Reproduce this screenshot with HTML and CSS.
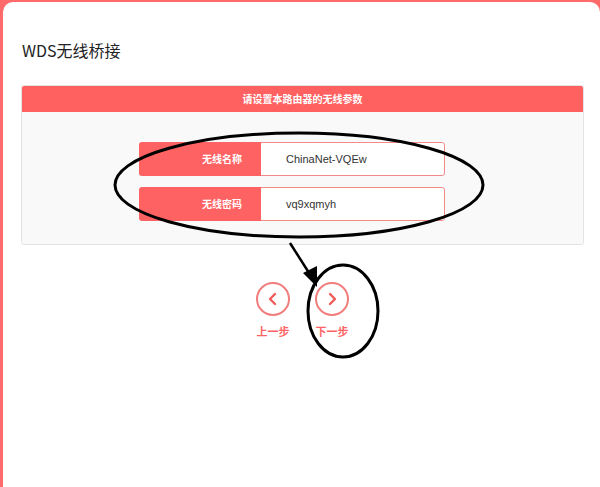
FILE: index.html
```html
<!DOCTYPE html>
<html lang="zh">
<head>
<meta charset="utf-8">
<title>WDS无线桥接</title>
<link rel="stylesheet" href="styles.css">
</head>
<body>
<div class="page">
  <h1 class="title">WDS无线桥接</h1>
  <div class="panel">
    <div class="panel-head">请设置本路由器的无线参数</div>
    <div class="panel-body">
      <div class="field">
        <div class="field-label">无线名称</div>
        <div class="field-value">ChinaNet-VQEw</div>
      </div>
      <div class="field">
        <div class="field-label">无线密码</div>
        <div class="field-value">vq9xqmyh</div>
      </div>
    </div>
  </div>
  <div class="nav">
    <div class="nav-btn">
      <div class="circle">
        <svg width="14" height="14" viewBox="0 0 14 14"><polyline points="9,2 4,7 9,12" fill="none" stroke="#f25a5a" stroke-width="2.4" stroke-linecap="round" stroke-linejoin="round"/></svg>
      </div>
      <div class="nav-label">上一步</div>
    </div>
    <div class="nav-btn">
      <div class="circle">
        <svg width="14" height="14" viewBox="0 0 14 14"><polyline points="5,2 10,7 5,12" fill="none" stroke="#f25a5a" stroke-width="2.4" stroke-linecap="round" stroke-linejoin="round"/></svg>
      </div>
      <div class="nav-label">下一步</div>
    </div>
  </div>
</div>
<svg class="marks" width="600" height="487" viewBox="0 0 600 487">
  <ellipse cx="299" cy="185" rx="184" ry="52" fill="none" stroke="#000" stroke-width="3"/>
  <line x1="290" y1="243" x2="311" y2="276" stroke="#000" stroke-width="2.5"/>
  <polygon points="317,287 303,273 317,266" fill="#000"/>
  <ellipse cx="343" cy="311" rx="35" ry="46" fill="none" stroke="#000" stroke-width="3"/>
</svg>
</body>
</html>
```

FILE: styles.css
```css
html, body {
  margin: 0;
  padding: 0;
}
body {
  background: #ff6b6b;
  width: 600px;
  height: 487px;
  overflow: hidden;
  position: relative;
  font-family: "Noto Sans CJK SC", "Noto Sans", sans-serif;
}
.page {
  margin: 2px 0 0 3px;
  height: 485px;
  background: #fff;
  border-radius: 10px 10px 0 0;
  overflow: hidden;
}
.title {
  margin: 0;
  padding: 38px 0 0 19px;
  font-size: 16px;
  line-height: 20px;
  font-weight: normal;
  color: #222;
}
.panel {
  margin: 25px 16px 0 18px;
  border: 1px solid #e3e3e3;
  border-radius: 3px;
  background: #f9f9f9;
  overflow: hidden;
}
.panel-head {
  height: 27px;
  margin: -1px -1px 0 -1px;
  background: #ff6161;
  color: #fff;
  font-size: 10px;
  font-weight: bold;
  line-height: 27px;
  text-align: center;
}
.panel-body {
  padding: 30px 0 23px 117px;
  display: flex;
  flex-direction: column;
  gap: 11px;
}
.field {
  width: 306px;
  height: 34px;
  display: flex;
  border-radius: 3px;
  overflow: hidden;
}
.field-label {
  width: 122px;
  background: #ff6262;
  color: #fff;
  font-size: 10px;
  font-weight: bold;
  line-height: 34px;
  text-align: right;
  padding-right: 19px;
  box-sizing: border-box;
}
.field-value {
  flex: 1;
  background: #fff;
  border: 1px solid #f28a8a;
  border-left: none;
  border-radius: 0 3px 3px 0;
  color: #333;
  font-family: "Liberation Sans", Arial, sans-serif;
  font-size: 11px;
  line-height: 32px;
  padding-left: 25px;
}
.nav {
  display: flex;
  justify-content: center;
  gap: 25px;
  margin: 37px 0 0 0;
  padding-left: 2px;
}
.nav-btn {
  display: flex;
  flex-direction: column;
  align-items: center;
  width: 34px;
}
.circle {
  width: 30px;
  height: 30px;
  border: 2px solid #f27d7d;
  border-radius: 50%;
  display: flex;
  align-items: center;
  justify-content: center;
}
.nav-label {
  margin-top: 8px;
  font-size: 11px;
  font-weight: bold;
  color: #ff6464;
  line-height: 14px;
  white-space: nowrap;
}
.marks {
  position: absolute;
  left: 0;
  top: 0;
  pointer-events: none;
}
```
